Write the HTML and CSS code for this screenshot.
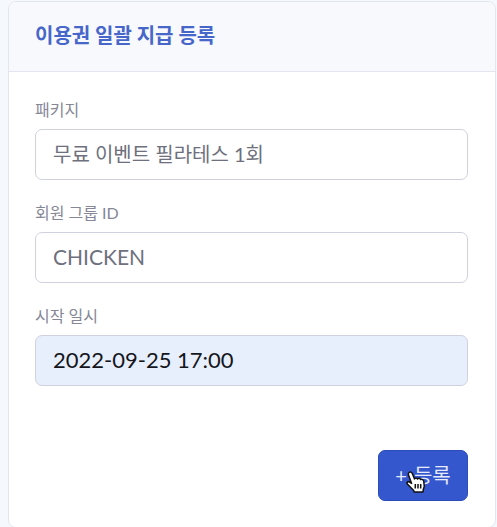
FILE: index.html
```html
<!DOCTYPE html>
<html lang="ko">
<head>
<meta charset="utf-8">
<meta name="viewport" content="width=device-width, initial-scale=1">
<title>이용권 일괄 지급 등록</title>
<link rel="stylesheet" href="styles.css">
</head>
<body>
<main class="card">
  <header class="card-header">
    <h1 class="card-title">이용권 일괄 지급 등록</h1>
  </header>
  <form class="card-body">
    <div class="field">
      <label class="label" for="package">패키지</label>
      <input class="control" id="package" type="text" value="무료 이벤트 필라테스 1회">
    </div>
    <div class="field">
      <label class="label" for="group">회원 그룹 ID</label>
      <input class="control control-code" id="group" type="text" value="CHICKEN">
    </div>
    <div class="field">
      <label class="label" for="start">시작 일시</label>
      <input class="control control-filled" id="start" type="text" value="2022-09-25 17:00">
    </div>
    <div class="actions">
      <button class="submit" type="button"><span>+</span><span>등록</span>
        <svg class="pointer" viewBox="0 0 20 24" aria-hidden="true">
          <path d="M3 2.5C4.3 1.3 5.8 2.3 6.3 3.6L8.5 9C9 7.6 11 7.7 11.5 9C12.4 7.8 14.2 8.2 14.6 9.6C16 8.8 17.5 9.7 17.7 11.2L18.2 15.5C18.4 17.3 17.5 18.3 17.2 20L17 22H8.2L7.6 20.3C5.8 18.8 3.8 16.6 1.5 14.2C0.2 12.7 1.8 10.9 3.5 12L5.6 13.4L2.5 5C2.1 4 2.1 3.2 3 2.5Z"/>
          <path class="pointer-lines" d="M9.3 14V18.5M12 14V18.5M14.7 14V18.5"/>
        </svg>
      </button>
    </div>
  </form>
</main>
</body>
</html>
```
FILE: styles.css
```css
* {
  box-sizing: border-box;
}

body {
  margin: 0;
  padding: 1px 1px 0 8px;
  background: #f5f8fc;
  color: #858796;
  font-family: Lato, "Noto Sans CJK KR", sans-serif;
}

.card {
  background: #fff;
  border: 1px solid #e3e6ee;
  border-radius: 8px;
  overflow: hidden;
}

.card-header {
  padding: 19px 26px 21px;
  background: #f8f9fc;
  border-bottom: 1px solid #e3e6ee;
}

.card-title {
  margin: 0;
  color: #4666ca;
  font-size: 20px;
  font-weight: 700;
  line-height: 29px;
}

.card-body {
  padding: 26px 27px 26px 26px;
}

.field {
  margin-bottom: 21px;
}

.label {
  display: block;
  margin-bottom: 8px;
  font-size: 16px;
  line-height: 23px;
}

.control {
  display: block;
  width: 100%;
  height: 51px;
  padding: 0 17px 2px;
  border: 1px solid #cfd1dc;
  border-radius: 7px;
  background: #fff;
  color: #6e707e;
  font: inherit;
  font-size: 20px;
}

.control-code {
  font-size: 21px;
}

.control-filled {
  background: #e8effc;
  color: #14161c;
  font-size: 22px;
}

.actions {
  display: flex;
  justify-content: flex-end;
  padding-top: 43px;
}

.submit {
  position: relative;
  display: flex;
  align-items: center;
  justify-content: center;
  gap: 7px;
  width: 90px;
  height: 51px;
  padding: 0 0 2px;
  border: 1px solid #2c4cb8;
  border-radius: 7px;
  background: #3557cd;
  color: #e6ebfc;
  font: inherit;
  font-size: 20px;
}

.pointer {
  position: absolute;
  left: 27px;
  top: 19px;
  width: 20px;
  height: 24px;
  fill: #fff;
  stroke: #111;
  stroke-width: 1.5;
  stroke-linejoin: round;
}

.pointer-lines {
  fill: none;
}
```
